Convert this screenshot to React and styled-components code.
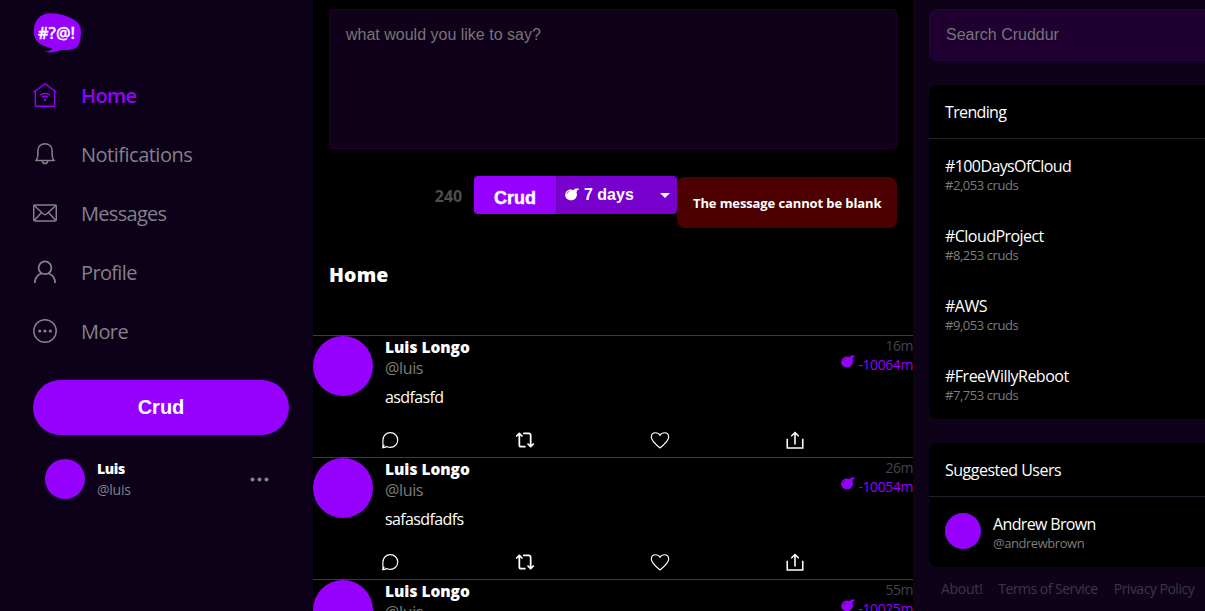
import React from "react";
import styled, { createGlobalStyle } from "styled-components";

const purple = "#9500ff";
const ui = '"Open Sans", "Noto Sans", sans-serif';
const arial = '"Liberation Sans", sans-serif';

const GlobalStyle = createGlobalStyle`
  * { box-sizing: border-box; }
  body { margin: 0; background: #000; color: #fff; font-family: ${ui}; overflow: hidden; }
  button, input, textarea { margin: 0; outline: none; }
  svg { display: block; flex: none; }
`;

const Page = styled.div`
  display: flex;
  height: 611px;
  overflow: hidden;
`;
const Sidebar = styled.aside`
  flex: 0 0 313px;
  padding: 12px 24px 0 33px;
  background: #0c0118;
`;
const Logo = styled.div`height: 54px;`;
const NavItem = styled.a`
  display: flex;
  align-items: center;
  gap: 24px;
  height: 59px;
  font-size: 20px;
  font-weight: ${(p) => (p.$active ? 600 : 430)};
  letter-spacing: ${(p) => p.$ls}px;
  color: ${(p) => (p.$active ? purple : "#85808b")};
  & > svg { margin-bottom: 2px; }
`;
const PostButton = styled.button`
  display: block;
  width: 256px;
  height: 55px;
  margin-top: 19px;
  padding: 0;
  border: 0;
  border-radius: 28px;
  background: ${purple};
  color: #fff;
  font: bold 20px ${arial};
`;
const Profile = styled.div`
  display: flex;
  align-items: center;
  gap: 12px;
  height: 64px;
  margin-top: 12px;
  padding: 0 20px 0 12px;
  & > svg { margin-left: auto; }
`;
const Avatar = styled.div`
  flex: none;
  width: ${(p) => p.$size}px;
  height: ${(p) => p.$size}px;
  border-radius: 50%;
  background: ${purple};
`;
const Label = styled.div`
  font-size: ${(p) => p.$size || 16}px;
  line-height: ${(p) => p.$lh || 21}px;
  font-weight: ${(p) => p.$weight || 430};
  letter-spacing: ${(p) => p.$ls || 0}px;
  color: ${(p) => p.$color || "#fff"};
  white-space: nowrap;
`;

const Main = styled.main`
  flex: 0 0 600px;
  overflow: hidden;
`;
const Form = styled.form`padding: 9px 16px 0;`;
const Message = styled.textarea`
  display: block;
  width: 100%;
  height: 140px;
  padding: 16px;
  border: 1px solid #20002f;
  border-radius: 4px;
  background: #10001a;
  color: #fff;
  resize: none;
  font: 16px/18px ${arial};
  &::placeholder { color: #757575; }
`;
const Submit = styled.div`
  display: flex;
  justify-content: flex-end;
  align-items: flex-start;
  margin-top: 27px;
`;
const Count = styled.div`
  margin-right: 12px;
  font: bold 16px/40px ${ui};
  letter-spacing: -0.1px;
  color: #4d4d4d;
`;
const CrudButton = styled.button`
  width: 82px;
  height: 38px;
  padding: 6px 0 0;
  border: 0;
  border-radius: 4px 0 0 4px;
  background: ${purple};
  color: #fff;
  font: 900 18px ${arial};
  -webkit-text-stroke: 0.4px #fff;
`;
const Expires = styled.div`
  display: flex;
  align-items: center;
  width: 121px;
  height: 38px;
  padding: 0 7px 0 8px;
  border-left: 1px solid #6600b0;
  border-radius: 0 4px 4px 0;
  background: #7700cc;
  font: bold 16px ${arial};
  & > span { margin: 0 auto 0 5px; }
`;
const ErrorBox = styled.div`
  width: 220px;
  height: 51px;
  margin-top: 1px;
  padding-left: 16px;
  border-radius: 8px;
  background: #4c0000;
  font: bold 13px/52px ${ui};
  letter-spacing: -0.11px;
  white-space: nowrap;
`;
const Heading = styled.div`
  height: 107px;
  padding: 32px 16px 0;
  font: 800 19.500px/30px ${ui};
  letter-spacing: 0.15px;
`;
const Activity = styled.article`
  height: 122px;
  border-top: 1px solid #3b3a4a;
`;
const ActivityHead = styled.div`
  display: flex;
  gap: 12px;
  height: 94px;
`;
const Body = styled.div`flex: 1; padding-top: 1px;`;
const Text = styled.div`margin-top: 8px;`;
const Meta = styled.div`
  display: flex;
  flex-direction: column;
  align-items: flex-end;
`;
const Expiry = styled.div`
  display: flex;
  gap: 3px;
`;
const Actions = styled.div`
  display: grid;
  grid-template-columns: repeat(4, 135px);
  padding-left: 67px;
`;

const Rail = styled.aside`
  flex: 1;
  min-width: 0;
  padding: 9px 0 0 16px;
  background: #0e0219;
  overflow: hidden;
`;
const Search = styled.input`
  display: block;
  width: 300px;
  height: 52px;
  padding: 0 16px 1px;
  border: 1px solid #290040;
  border-radius: 8px;
  background: #1f0031;
  font: 16px ${arial};
  &::placeholder { color: #757575; }
`;
const Card = styled.section`
  width: 300px;
  height: ${(p) => p.$h}px;
  margin-top: 24px;
  border-radius: 8px;
  background: #000;
`;
const CardTitle = styled.div`
  height: 54px;
  padding: 17px 16px 0;
  border-bottom: 1px solid #20232d;
`;
const Trend = styled.div`
  height: 70px;
  padding: 17px 16px 0;
`;
const User = styled.div`
  display: flex;
  gap: 12px;
  padding: 16px;
`;
const UserText = styled.div`padding-top: 1px;`;
const Links = styled.nav`
  display: flex;
  gap: 16px;
  padding: 11px 12px 0;
`;

const Svg = ({ s = 24, children, w = 1.5, ...rest }) => (
  <svg width={s} height={s} viewBox="0 0 24 24" fill="none" stroke="currentColor" strokeWidth={w} {...rest}>
    {children}
  </svg>
);
const icons = {
  home: (
    <Svg w={1.4}>
      <path d="M.6 9.3 12 .8l11.4 8.500M2.300 8.300v14c0 .5.3.9.9.9h17.600c.6 0 .9-.4.9-.9v-14" />
      <path d="M7.300 12.300c2.800-2.500 6.600-2.500 9.400 0M9.100 14.400c1.800-1.500 4-1.500 5.800 0" />
      <circle cx="12" cy="16.700" r="1.200" fill="currentColor" stroke="none" />
    </Svg>
  ),
  bell: (
    <Svg w={1.5}>
      <path d="M2.800 18.600c1.700-1.600 2.100-3 2.100-7V8.400C4.900 4.400 8 1.700 12 1.700s7.100 2.700 7.100 6.700v3.200c0 4 .4 5.400 2.100 7z" strokeLinejoin="round" />
      <path d="M9.200 18.800c.2 1.600 1.300 2.700 2.800 2.700s2.600-1.100 2.800-2.700" />
    </Svg>
  ),
  mail: (
    <Svg w={1.5}>
      <rect x=".7" y="4" width="22.600" height="16" rx="1.300" />
      <path d="m1.200 4.500 8.900 8.300c1.200 1.100 2.600 1.100 3.800 0l8.900-8.300M1.200 19.500l7.300-8M22.800 19.500l-7.300-8" />
    </Svg>
  ),
  user: (
    <Svg w={1.8}>
      <circle cx="12" cy="7.800" r="6.400" />
      <path d="M1.900 23c0-4.600 2.400-8 6.500-9.500M22.100 23c0-4.600-2.400-8-6.500-9.500" />
    </Svg>
  ),
  more: (
    <Svg w={1.5}>
      <circle cx="12" cy="12" r="11.200" />
      <g fill="currentColor" stroke="none">
        <circle cx="6.700" cy="12" r="1.600" /><circle cx="12" cy="12" r="1.600" /><circle cx="17.300" cy="12" r="1.600" />
      </g>
    </Svg>
  ),
};

const Bomb = ({ color = "#fff", s = 14 }) => (
  <svg width={s} height={s} viewBox="0 0 14 14" fill={color}>
    <path d="M8.300 2.300 9.700 1.100c.5-.5 1-.6 1.600-.5l2.500-.1v1.300l-1.700.1.200 1.200-.9.900c.5 1 .7 2 .5 3.200-.4 3-3 5.200-6 5.100C2.500 12.200.1 9.700.2 6.700.3 3.700 2.900 1.300 5.900 1.500c.9.100 1.700.3 2.400.8z" />
    <path d="M1.900 6c.3-1.400 1.200-2.300 2.600-2.700" fill="none" stroke="#0008" strokeWidth=".9" />
  </svg>
);

const nav = [
  ["Home", "home", -0.6],
  ["Notifications", "bell", -0.5],
  ["Messages", "mail", -0.7],
  ["Profile", "user", -0.65],
  ["More", "more", -0.6],
];
const feed = [
  ["asdfasfd", "16m", "-10064m"],
  ["safasdfadfs", "26m", "-10054m"],
  ["safasdfadfs", "55m", "-10025m"],
];
const trends = [
  ["#100DaysOfCloud", "2,053", -0.6],
  ["#CloudProject", "8,253", -0.55],
  ["#AWS", "9,053", -0.5],
  ["#FreeWillyReboot", "7,753", -0.5],
];

export default function App() {
  return (
    <Page>
      <GlobalStyle />
      <Sidebar>
        <Logo>
          <svg width="49" height="42" viewBox="0 0 49 42">
            <path fill={purple} d="M.7 19C1 8 8 1 18 1.300c9 .2 17 2.800 23.500 6.700 4.800 3 6.700 7 6.500 12.500-.2 5.300-.7 10.500-3.500 14-3.500 3.500-10 3.700-16.500 3.500-4.500 2.300-10.500 3.300-16.300 1.600 3.500-.3 6.400-1.400 7.700-3.200C8.500 34.200.4 30 .7 19z" />
            <text x="5" y="27" fill="#fff" stroke="#fff" strokeWidth=".3" fontFamily="Open Sans, sans-serif" fontWeight="600" fontSize="17" textLength="37" lengthAdjust="spacingAndGlyphs">#?@!</text>
          </svg>
        </Logo>
        {nav.map(([t, i, ls]) => (
          <NavItem key={t} $active={t === "Home"} $ls={ls}>
            {icons[i]}
            <span>{t}</span>
          </NavItem>
        ))}
        <PostButton>Crud</PostButton>
        <Profile>
          <Avatar $size={40} />
          <div>
            <Label $size={14} $weight={800} $ls={-0.35}>Luis</Label>
            <Label $size={14} $color="#85808b" $ls={-0.25}>@luis</Label>
          </div>
          <svg width="19" height="5" viewBox="0 0 19 5" fill="#85808b">
            <circle cx="2.500" cy="2.500" r="2" /><circle cx="9.500" cy="2.500" r="2" /><circle cx="16.500" cy="2.500" r="2" />
          </svg>
        </Profile>
      </Sidebar>

      <Main>
        <Form>
          <Message placeholder="what would you like to say?" />
          <Submit>
            <Count>240</Count>
            <CrudButton type="button">Crud</CrudButton>
            <Expires>
              <Bomb />
              <span>7 days</span>
              <svg width="10" height="5" viewBox="0 0 10 5"><path d="M0 0h10L5 5z" fill="#fff" /></svg>
            </Expires>
            <ErrorBox>The message cannot be blank</ErrorBox>
          </Submit>
        </Form>
        <Heading>Home</Heading>
        {feed.map(([msg, ago, exp]) => (
          <Activity key={ago}>
            <ActivityHead>
              <Avatar $size={60} />
              <Body>
                <Label $weight={800} $size={15.5} $ls={-0.02}>Luis Longo</Label>
                <Label $color="#7d7d7d" $ls={-0.35}>@luis</Label>
                <Text><Label $ls={-0.62}>{msg}</Label></Text>
              </Body>
              <Meta>
                <Label $size={14} $lh={19} $color="#44424f" $ls={-0.5}>{ago}</Label>
                <Expiry>
                  <Bomb color={purple} />
                  <Label $size={14} $lh={20} $color={purple} $ls={-0.42}>{exp}</Label>
                </Expiry>
              </Meta>
            </ActivityHead>
            <Actions>
              <Svg s={20} w={1.4}>
                <path d="M3.500 21.300V12a8.900 8.900 0 1 1 8.900 8.900c-1.600 0-3-.4-4.200-1.100-1.200.9-2.700 1.500-4.700 1.500 1-.9 1.400-2 1.300-3.600" />
              </Svg>
              <Svg s={20} w={2.1} strokeLinecap="round" strokeLinejoin="round">
                <path d="M2 7.200 5.200 4l3.200 3.200M5.200 4.500V18c0 1.200.8 2 2 2h4.600M10.500 4h5.800c1.400 0 2.500 1.100 2.500 2.500v13M15.600 16.800l3.200 3.200 3.200-3.200" />
              </Svg>
              <Svg s={20} w={1.4}>
                <path d="M12 21.500C6.500 17 1.600 13.200 1.600 8.400c0-3 2.200-5.100 5-5.100 2.300 0 4.300 1.100 5.400 3.100 1.100-2 3.100-3.100 5.400-3.100 2.800 0 5 2.100 5 5.100 0 4.800-4.900 8.600-10.400 13.100z" />
              </Svg>
              <Svg s={20} w={1.9}>
                <path d="M2.700 10.500v11h18.600v-11M12 17.500V3.500M7.500 7.500 12 3l4.500 4.500" />
              </Svg>
            </Actions>
          </Activity>
        ))}
      </Main>

      <Rail>
        <Search placeholder="Search Cruddur" />
        <Card $h={334}>
          <CardTitle><Label $ls={-0.65}>Trending</Label></CardTitle>
          {trends.map(([tag, n, ls]) => (
            <Trend key={tag}>
              <Label $ls={ls}>{tag}</Label>
              <Label $size={13} $lh={17} $color="#7d7d7d" $ls={-0.45}>#{n} cruds</Label>
            </Trend>
          ))}
        </Card>
        <Card $h={124}>
          <CardTitle><Label $ls={-0.5}>Suggested Users</Label></CardTitle>
          <User>
            <Avatar $size={36} />
            <UserText>
              <Label $ls={-0.65}>Andrew Brown</Label>
              <Label $size={13} $lh={17} $color="#7d7d7d" $ls={-0.45}>@andrewbrown</Label>
            </UserText>
          </User>
        </Card>
        <Links>
          <Label $size={14} $color="#3e3548" $ls={-0.3}>About!</Label>
          <Label $size={14} $color="#3e3548" $ls={-0.52}>Terms of Service</Label>
          <Label $size={14} $color="#3e3548" $ls={-0.5}>Privacy Policy</Label>
        </Links>
      </Rail>
    </Page>
  );
}
